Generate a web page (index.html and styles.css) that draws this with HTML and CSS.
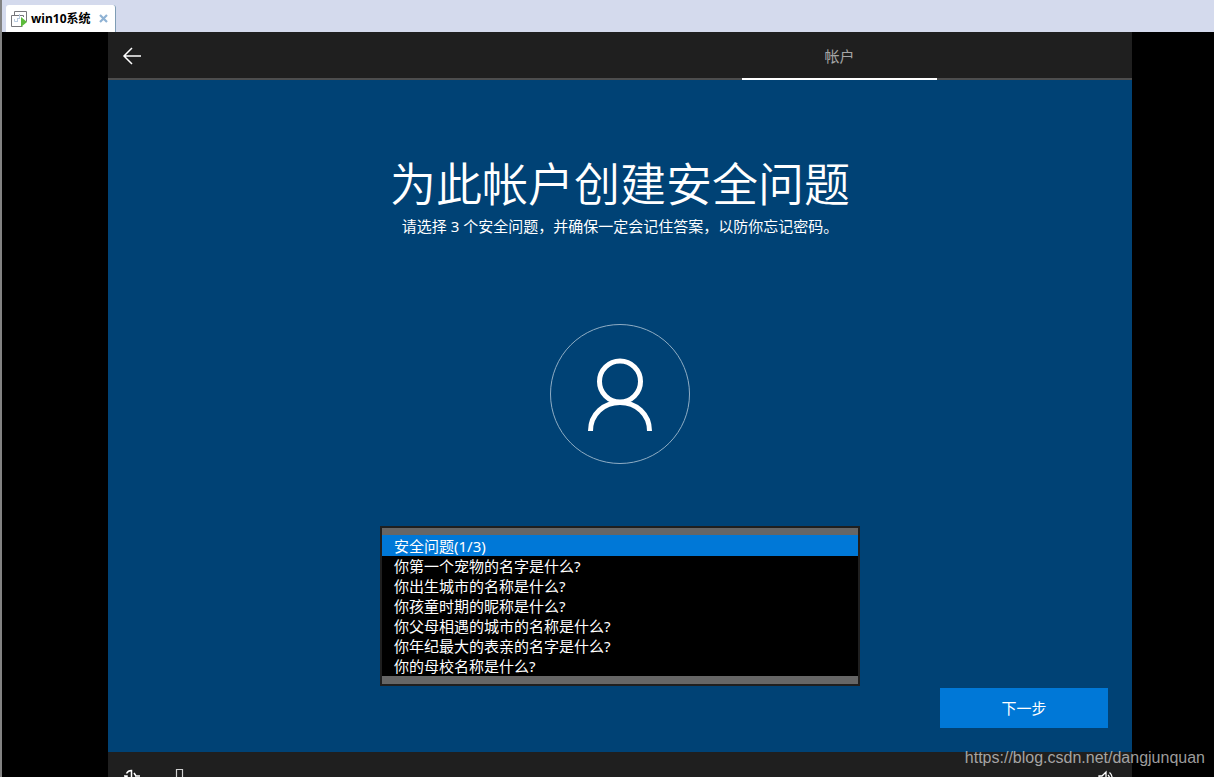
FILE: index.html
```html
<!DOCTYPE html>
<html lang="zh-CN">
<head>
<meta charset="utf-8">
<title>win10系统</title>
<link rel="stylesheet" href="styles.css">
</head>
<body>
<div class="window">
  <div class="tabstrip">
    <div class="vm-tab">
      <svg class="vm-icon" width="16" height="16" viewBox="0 0 16 16" aria-hidden="true">
        <path d="M3.500 5V.5h12v10h-3" fill="none" stroke="#77777b"/>
        <path d="M12.500 6V4.500H.5v11h11" fill="none" stroke="#77777b"/>
        <path d="M3.500 8v2.500h3M8.500 3v4M6.500 8v3M9 7.500h-3" fill="none" stroke="#b9cbe0"/>
        <path d="M10 6l6 5-6 5z" fill="#5cbb3a"/>
      </svg>
      <span class="vm-name">win10系统</span>
      <button class="close" aria-label="关闭">
        <svg width="9" height="9" viewBox="0 0 9 9"><path d="M1 1l7 7M8 1L1 8" stroke="#8fb2d4" stroke-width="2.200"/></svg>
      </button>
    </div>
  </div>
  <div class="viewport">
    <div class="screen">
      <header class="topbar">
        <button class="back" aria-label="返回">
          <svg width="20" height="20" viewBox="0 0 20 20"><path d="M19 11H2M10 3l-8 8 8 8" fill="none" stroke="#fff" stroke-width="1.500"/></svg>
        </button>
        <a class="step" href="#">帐户</a>
      </header>
      <main class="content">
        <h1 class="title">为此帐户创建安全问题</h1>
        <p class="subtitle">请选择 3 个安全问题，并确保一定会记住答案，以防你忘记密码。</p>
        <svg class="avatar" width="140" height="140" viewBox="0 0 140 140" aria-hidden="true">
          <circle cx="70" cy="70" r="69.500" fill="none" stroke="#8fadc4"/>
          <circle cx="70" cy="57.500" r="20.500" fill="none" stroke="#fff" stroke-width="5"/>
          <path d="M40.500 107C40.500 90 54 78.500 70 78.500S99.500 90 99.500 107" fill="none" stroke="#fff" stroke-width="5"/>
        </svg>
        <div class="listbox">
          <select class="questions" size="7" aria-label="安全问题">
            <option selected>安全问题(1/3)</option>
            <option>你第一个宠物的名字是什么?</option>
            <option>你出生城市的名称是什么?</option>
            <option>你孩童时期的昵称是什么?</option>
            <option>你父母相遇的城市的名称是什么?</option>
            <option>你年纪最大的表亲的名字是什么?</option>
            <option>你的母校名称是什么?</option>
          </select>
        </div>
        <button class="next">下一步</button>
      </main>
      <footer class="bottombar">
        <svg width="18" height="18" viewBox="0 0 18 18" aria-hidden="true"><path d="M12 8h5M3 8C1 12 3 16 8 16s7-3 7-7M1 8h3v4M3.500 5.500C4.500 3.500 6 2.500 8.500 2.500V9M11 5l2 3" fill="none" stroke="#fff" stroke-width="1.500"/></svg>
        <svg class="mic" width="10" height="18" viewBox="0 0 10 18" aria-hidden="true"><path d="M1.500 1.500h6V13h-6z" fill="none" stroke="#d0d0d0" stroke-width="1.200"/></svg>
        <svg class="volume" width="16" height="18" viewBox="0 0 16 18" aria-hidden="true"><path d="M1 8h3l4-4v13l-4-4H1zM10 7c2 2 2 5 0 7M11.500 4.500c3.500 3 3.500 8 0 11" fill="none" stroke="#fff" stroke-width="1.300"/></svg>
      </footer>
    </div>
  </div>
  <div class="watermark">https://blog.csdn.net/dangjunquan</div>
</div>
</body>
</html>
```
FILE: styles.css
```css
* {
  box-sizing: border-box;
}

body {
  margin: 0;
  font-family: "Noto Sans", "Noto Sans CJK SC", sans-serif;
  font-size: 15px;
  color: #fff;
  background: #000;
}

button {
  padding: 0;
  border: 0;
  background: none;
  color: inherit;
  font: inherit;
}

svg {
  display: block;
}

.window {
  position: relative;
  display: flex;
  flex-direction: column;
  height: 100vh;
  overflow: hidden;
  border-left: 2px solid #828282;
}

.tabstrip {
  display: flex;
  align-items: flex-end;
  height: 32px;
  padding-left: 4px;
  background: #d4daed;
}

.vm-tab {
  display: flex;
  align-items: center;
  height: 27px;
  padding: 0 7px 0 5px;
  border-right: 1px solid #7f9db5;
  border-radius: 3px 3px 0 0;
  background: #fff;
}

.vm-name {
  margin: 0 8px 0 4px;
  color: #000;
  font: bold 12px/18px "Open Sans", "Noto Sans CJK SC", sans-serif;
}

.viewport {
  display: flex;
  flex: 1;
  min-height: 0;
  padding: 0 82px 0 106px;
  background: #000;
}

.screen {
  display: flex;
  flex: 1;
  flex-direction: column;
}

.topbar {
  display: flex;
  flex: none;
  height: 48px;
  padding: 0 195px 0 14px;
  border-bottom: 2px solid #4d4d4d;
  background: #1f1f1f;
}

.back {
  margin-right: auto;
}

.step {
  width: 195px;
  height: 48px;
  border-bottom: 2px solid #fff;
  color: #a5a5a5;
  line-height: 48px;
  text-align: center;
  text-decoration: none;
}

.content {
  display: flex;
  flex: 1;
  flex-direction: column;
  align-items: center;
  padding: 69px 24px 24px;
  background: #004275;
}

.title {
  margin: 0 0 3px;
  font: 350 46px/64px "Noto Sans CJK SC", sans-serif;
}

.subtitle {
  margin: 0;
  line-height: 20px;
}

.avatar {
  margin-top: 88px;
}

.listbox {
  width: 480px;
  margin-top: 62px;
  padding: 7px 0 8px;
  border: 2px solid #1f1f1f;
  background: #666;
  background-clip: padding-box;
}

.questions {
  display: block;
  width: 100%;
  height: 141px;
  padding: 0;
  border: 0;
  border-radius: 0;
  outline: 0;
  overflow: hidden;
  background: #000;
  color: #fff;
  font: inherit;
}

.questions option {
  display: flex;
  align-items: flex-end;
  height: 20px;
  min-height: 20px;
  padding: 0 12px;
}

.questions option:checked {
  height: 21px;
  background: #0078d7 linear-gradient(#0078d7, #0078d7);
  -webkit-text-fill-color: #fff;
}

.next {
  align-self: flex-end;
  width: 168px;
  height: 40px;
  margin-top: 2px;
  padding-bottom: 2px;
  background: #0078d7;
}

.bottombar {
  display: flex;
  flex: none;
  height: 25px;
  padding: 16px 18px 0 15px;
  background: #1f1f1f;
}

.mic {
  margin-left: 34px;
}

.volume {
  margin-left: auto;
}

.watermark {
  position: absolute;
  right: 9px;
  bottom: 9px;
  color: rgba(210, 210, 210, 0.75);
  font: 16px/20px "Liberation Sans", sans-serif;
}
```
